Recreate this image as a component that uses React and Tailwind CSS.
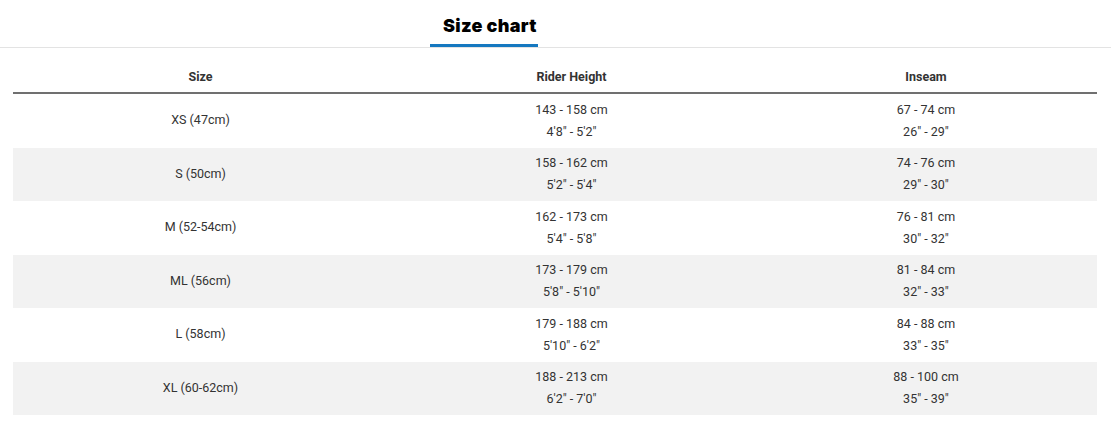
import React from "react"

const rows = [
  { size: "XS (47cm)", height: ["143 - 158 cm", "4'8\" - 5'2\""], inseam: ["67 - 74 cm", "26\" - 29\""] },
  { size: "S (50cm)", height: ["158 - 162 cm", "5'2\" - 5'4\""], inseam: ["74 - 76 cm", "29\" - 30\""] },
  { size: "M (52-54cm)", height: ["162 - 173 cm", "5'4\" - 5'8\""], inseam: ["76 - 81 cm", "30\" - 32\""] },
  { size: "ML (56cm)", height: ["173 - 179 cm", "5'8\" - 5'10\""], inseam: ["81 - 84 cm", "32\" - 33\""] },
  { size: "L (58cm)", height: ["179 - 188 cm", "5'10\" - 6'2\""], inseam: ["84 - 88 cm", "33\" - 35\""] },
  { size: "XL (60-62cm)", height: ["188 - 213 cm", "6'2\" - 7'0\""], inseam: ["88 - 100 cm", "35\" - 39\""] },
]

const Lines = ({ lines }) => (
  <div className="flex flex-col items-center">
    {lines.map((l) => (
      <span key={l} className="leading-[22px]">
        {l}
      </span>
    ))}
  </div>
)

export default function App() {
  return (
    <div className="w-[1111px] h-[426px] bg-white font-['Roboto',sans-serif] text-[12.5px] text-[#333]">
      {/* tabs */}
      <div className="border-b border-[#e3e3e3] h-[48px] flex">
        <div className="ml-[430px] w-[108px] flex flex-col">
          <div className="h-[45px] pt-[13px] pl-[13px] font-['Inter',sans-serif] font-black text-[18px] tracking-[0.3px] text-black leading-[26px] whitespace-nowrap">
            Size chart
          </div>
          <div className="h-[3px] w-full bg-[#1578c0]" />
        </div>
      </div>

      {/* table */}
      <div className="mx-[13px] grid grid-cols-[375px_367px_342px]">
        {["Size", "Rider Height", "Inseam"].map((h) => (
          <div
            key={h}
            className="h-[46px] flex items-center justify-center pt-[14px] font-bold border-b-2 border-[#707070]"
          >
            {h}
          </div>
        ))}
        {rows.map((r, i) => (
          <React.Fragment key={r.size}>
            <div className={`h-[53.5px] flex items-center justify-center ${i % 2 ? "bg-[#f2f2f2]" : ""}`}>
              {r.size}
            </div>
            <div className={`h-[53.5px] flex items-center justify-center ${i % 2 ? "bg-[#f2f2f2]" : ""}`}>
              <Lines lines={r.height} />
            </div>
            <div className={`h-[53.5px] flex items-center justify-center ${i % 2 ? "bg-[#f2f2f2]" : ""}`}>
              <Lines lines={r.inseam} />
            </div>
          </React.Fragment>
        ))}
      </div>
    </div>
  )
}
